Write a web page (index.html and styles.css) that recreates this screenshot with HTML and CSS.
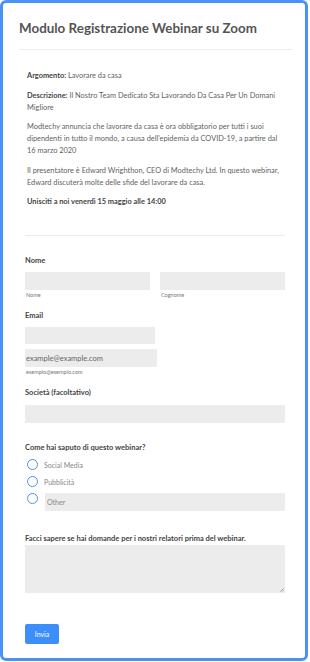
FILE: index.html
```html
<!DOCTYPE html>
<html lang="it">
<head>
<meta charset="utf-8">
<link rel="stylesheet" href="styles.css">
</head>
<body>
<div class="frame">
  <header class="header">
    <h1 class="title">Modulo Registrazione Webinar su Zoom</h1>
  </header>
  <section class="intro">
    <p><b>Argomento:</b> Lavorare da casa</p>
    <p><b>Descrizione:</b> Il Nostro Team Dedicato Sta Lavorando Da Casa Per Un Domani Migliore</p>
    <p>Modtechy annuncia che lavorare da casa è ora obbligatorio per tutti i suoi dipendenti in tutto il mondo, a causa dell'epidemia da COVID-19, a partire dal 16 marzo 2020</p>
    <p>Il presentatore è Edward Wrighthon, CEO di Modtechy Ltd. In questo webinar, Edward discuterà molte delle sfide del lavorare da casa.</p>
    <p><b>Unisciti a noi venerdì 15 maggio alle 14:00</b></p>
  </section>
  <form class="form">
    <div class="field field-name">
      <div class="label">Nome</div>
      <div class="row">
        <div class="col">
          <div class="input"></div>
          <div class="sub">Nome</div>
        </div>
        <div class="col">
          <div class="input"></div>
          <div class="sub">Cognome</div>
        </div>
      </div>
    </div>
    <div class="field field-email">
      <div class="label">Email</div>
      <div class="input email1"></div>
      <div class="input email2"><span class="ph">example@example.com</span></div>
      <div class="sub">esempio@esempio.com</div>
    </div>
    <div class="field field-company">
      <div class="label">Società (facoltativo)</div>
      <div class="input"></div>
    </div>
    <div class="field field-radio">
      <div class="label">Come hai saputo di questo webinar?</div>
      <div class="radio"><span class="dot"></span><span class="rlabel">Social Media</span></div>
      <div class="radio"><span class="dot"></span><span class="rlabel">Pubblicità</span></div>
      <div class="radio radio-other"><span class="dot"></span><div class="input other"><span class="ph2">Other</span></div></div>
    </div>
    <div class="field field-text">
      <div class="label">Facci sapere se hai domande per i nostri relatori prima del webinar.</div>
      <div class="textarea">
        <svg class="grip" width="5" height="5" viewBox="0 0 5 5"><path d="M4.5 1.5L1.5 4.5M4.5 3.2L3.2 4.5" stroke="#888" stroke-width="0.7"/></svg>
      </div>
    </div>
    <div class="actions">
      <div class="button">Invia</div>
    </div>
  </form>
</div>
</body>
</html>
```

FILE: styles.css
```css
* { box-sizing: border-box; }
html, body { margin: 0; padding: 0; background: #fff; }
body { font-family: Lato, "Noto Sans", sans-serif; color: #555; }
.frame {
  width: 308px;
  height: 661px;
  border: 3px solid #4a92f6;
  border-radius: 6px;
  background: #fff;
  overflow: hidden;
}
.header {
  margin: 0 13px 0 16px;
  padding: 16px 0 12px;
  border-bottom: 1px solid #ececec;
}
.title {
  margin: 0;
  font-size: 13.4px;
  line-height: 18px;
  font-weight: 700;
  color: #555;
  white-space: nowrap;
}
.intro {
  margin: 0 20px 0 22px;
  padding: 20px 1px 27px 2px;
  border-bottom: 1px solid #ececec;
  font-size: 7.4px;
  line-height: 12px;
  color: #5f5f5f;
}
.intro p { margin: 0 0 7.5px; }
.intro p:last-child { margin-bottom: 0; }
.intro b { font-weight: 700; color: #444; }
.form { margin: 0 20px 0 22px; padding-top: 19px; }
.label { font-size: 7.5px; font-weight: 700; color: #444; line-height: 12px; }
.input { background: #ececec; height: 18px; }
.sub { font-size: 5.5px; color: #777; line-height: 8px; margin-top: 1px; padding-left: 1px; }
.field-name .label { margin-bottom: 5px; }
.row { display: flex; gap: 10px; }
.col { flex: 1; }
.field-email { margin-top: 11px; }
.field-email .label { margin-bottom: 5px; }
.email1 { width: 130px; height: 17px; }
.email2 { width: 132px; margin-top: 5px; display: flex; align-items: center; padding-left: 1px; }
.ph { font-size: 7.5px; color: #666; }
.field-company { margin-top: 11px; }
.field-company .label { margin-bottom: 6px; }
.field-radio { margin-top: 19px; }
.field-radio .label { margin-bottom: 2px; }
.radio { display: flex; align-items: center; height: 17px; padding-left: 2px; }
.dot {
  width: 11px; height: 11px; border-radius: 50%;
  border: 1.3px solid #4a92f6; flex: none;
}
.rlabel { font-size: 7px; color: #888; margin-left: 6px; }
.radio-other { align-items: flex-start; height: 18px; margin-top: 3px; }
.other { flex: 1; margin-left: 7px; display: flex; align-items: center; padding-left: 2px; }
.ph2 { font-size: 7px; color: #888; }
.field-text { margin-top: 22px; }
.textarea { background: #ececec; height: 48px; position: relative; }
.grip { position: absolute; right: 1px; bottom: 1px; }
.actions { margin-top: 28px; }
.button {
  display: inline-flex; align-items: center; justify-content: center;
  width: 34px; height: 20px; background: #3d8ef8; color: #fff;
  border-radius: 2px; font-size: 7px;
}
```
